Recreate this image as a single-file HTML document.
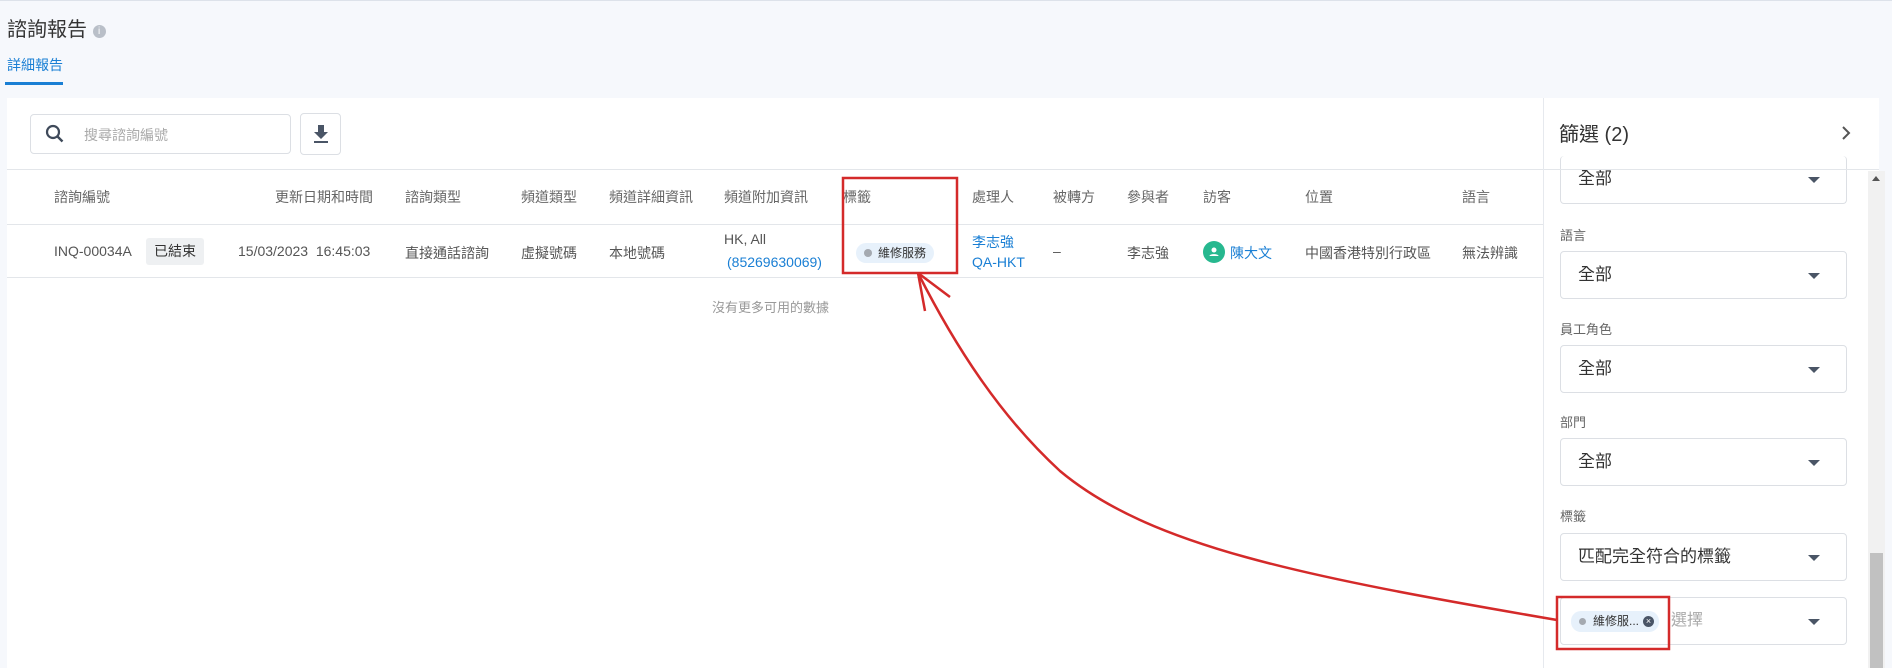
<!DOCTYPE html>
<html><head><meta charset="utf-8"><style>
*{box-sizing:border-box;margin:0;padding:0}
body{width:1892px;height:662px;overflow:hidden;background:#f6f8fc;font-family:"Liberation Sans","Noto Sans CJK TC",sans-serif;color:#555;position:relative;border-top:1px solid #dde2ea}
.a{position:absolute;white-space:nowrap}
.h{font-size:14px;color:#666;top:186px}
.d{font-size:14px;color:#555;top:242px}
.lk{color:#1a7fd4}
.card{position:absolute;left:7px;top:97px;width:1536px;height:570px;background:#fff}
.panel{position:absolute;left:1543px;top:97px;width:336px;height:570px;background:#fff;border-left:1px solid #e6e9ee}
.sel{position:absolute;left:1560px;width:287px;height:48px;border:1px solid #dcdfe4;border-radius:4px;background:#fff;font-size:17px;color:#333;padding:0 0 0 17px;line-height:46px}
.sel:after{content:"";position:absolute;right:26px;top:21px;border-left:6px solid transparent;border-right:6px solid transparent;border-top:6px solid #4a5566}
.lb{position:absolute;left:1560px;font-size:13px;color:#666}
.line{position:absolute;height:1px;background:#e3e6ea}
</style></head><body>
<div class="a" style="left:7px;top:12px;font-size:20px;color:#333">諮詢報告 <span style="display:inline-block;width:13px;height:13px;border-radius:50%;background:#b9bfc8;color:#fff;font-size:10px;text-align:center;line-height:13px;vertical-align:2px">i</span></div>
<div class="a" style="left:7px;top:54px;font-size:14px;color:#1a7fd4">詳細報告</div>
<div class="a" style="left:5px;top:81px;width:58px;height:3px;background:#1a7fd4"></div>

<div class="card"></div>
<div class="a" style="left:30px;top:113px;width:261px;height:40px;border:1px solid #dcdfe4;border-radius:4px"></div>
<svg class="a" style="left:44px;top:122px" width="22" height="22" viewBox="0 0 22 22"><circle cx="9" cy="9" r="6" fill="none" stroke="#3f4a5a" stroke-width="2.2"/><path d="M13.5 13.5l5 5" stroke="#3f4a5a" stroke-width="2.4"/></svg>
<div class="a" style="left:84px;top:124px;font-size:14px;color:#aaa">搜尋諮詢編號</div>
<div class="a" style="left:300px;top:112px;width:41px;height:42px;border:1px solid #dcdfe4;border-radius:4px"></div>
<svg class="a" style="left:311px;top:122px" width="20" height="22" viewBox="0 0 20 22"><path d="M7 2h6v7h4l-7 7-7-7h4z" fill="#4a5566"/><rect x="3" y="18" width="14" height="2" fill="#4a5566"/></svg>
<div class="line" style="left:7px;top:168px;width:1536px"></div>
<div class="line" style="left:7px;top:223px;width:1536px"></div>
<div class="line" style="left:7px;top:276px;width:1536px"></div>

<div class="a h" style="left:54px">諮詢編號</div>
<div class="a h" style="left:275px">更新日期和時間</div>
<div class="a h" style="left:405px">諮詢類型</div>
<div class="a h" style="left:521px">頻道類型</div>
<div class="a h" style="left:609px">頻道詳細資訊</div>
<div class="a h" style="left:724px">頻道附加資訊</div>
<div class="a h" style="left:843px">標籤</div>
<div class="a h" style="left:972px">處理人</div>
<div class="a h" style="left:1053px">被轉方</div>
<div class="a h" style="left:1127px">參與者</div>
<div class="a h" style="left:1203px">訪客</div>
<div class="a h" style="left:1305px">位置</div>
<div class="a h" style="left:1462px">語言</div>

<div class="a d" style="left:54px">INQ-00034A</div>
<div class="a" style="left:146px;top:237px;width:58px;height:27px;background:#eef0f2;border-radius:3px;font-size:14px;color:#333;text-align:center;line-height:27px">已結束</div>
<div class="a d" style="left:238px">15/03/2023&nbsp; 16:45:03</div>
<div class="a d" style="left:405px">直接通話諮詢</div>
<div class="a d" style="left:521px">虛擬號碼</div>
<div class="a d" style="left:609px">本地號碼</div>
<div class="a d" style="left:724px;top:230px">HK, All</div>
<div class="a d lk" style="left:727px;top:253px">(85269630069)</div>
<div class="a" style="left:856px;top:242px;height:20px;padding:0 8px 0 22px;border-radius:10px;background:#e7f1fb;font-size:12px;color:#333;line-height:20px">維修服務<span style="position:absolute;left:8px;top:6px;width:8px;height:8px;border-radius:50%;background:#a4a9b0"></span></div>
<div class="a d lk" style="left:972px;top:231px">李志強</div>
<div class="a d lk" style="left:972px;top:253px">QA-HKT</div>
<div class="a d" style="left:1053px">–</div>
<div class="a d" style="left:1127px">李志強</div>
<div class="a" style="left:1203px;top:240px;width:22px;height:22px;border-radius:50%;background:#27b88f"><svg width="22" height="22" viewBox="0 0 22 22"><circle cx="11" cy="9" r="2.5" fill="#fff"/><path d="M6.5 15c0-2.5 9-2.5 9 0z" fill="#fff"/></svg></div>
<div class="a d lk" style="left:1230px">陳大文</div>
<div class="a d" style="left:1305px">中國香港特別行政區</div>
<div class="a d" style="left:1462px">無法辨識</div>
<div class="a" style="left:712px;top:296px;font-size:13px;color:#999">沒有更多可用的數據</div>

<div class="panel"></div>
<div class="a" style="left:1559px;top:117px;font-size:20px;color:#333">篩選 (2)</div>
<svg class="a" style="left:1839px;top:124px" width="14" height="16" viewBox="0 0 14 16"><path d="M4 2l6 6-6 6" fill="none" stroke="#555" stroke-width="2"/></svg>
<div class="sel" style="top:155px;height:48px;border-top:none">全部</div>
<div class="line" style="left:1544px;top:168px;width:335px"></div>
<div class="lb" style="top:224px">語言</div>
<div class="sel" style="top:250px">全部</div>
<div class="lb" style="top:318px">員工角色</div>
<div class="sel" style="top:344px">全部</div>
<div class="lb" style="top:411px">部門</div>
<div class="sel" style="top:437px">全部</div>
<div class="lb" style="top:505px">標籤</div>
<div class="sel" style="top:532px">匹配完全符合的標籤</div>
<div class="sel" style="top:596px"><span style="position:absolute;left:10px;top:13px;height:21px;width:88px;border-radius:10px;background:#e7f1fb;font-size:12px;color:#333;line-height:21px;padding-left:22px">維修服...<span style="position:absolute;left:8px;top:7px;width:7px;height:7px;border-radius:50%;background:#a4a9b0"></span><span style="position:absolute;right:5px;top:5px;width:11px;height:11px;border-radius:50%;background:#4a5566;color:#fff;font-size:9px;line-height:11px;text-align:center">×</span></span><span style="position:absolute;left:110px;top:0;font-size:16px;color:#aaa">選擇</span></div>
<div class="a" style="left:1868px;top:170px;width:17px;height:497px;background:#f1f1f1"></div>
<div class="a" style="left:1872px;top:175px;border-left:4px solid transparent;border-right:4px solid transparent;border-bottom:5px solid #555"></div>
<div class="a" style="left:1870px;top:552px;width:13px;height:115px;background:#c1c1c1"></div>

<svg class="a" style="left:0;top:0" width="1892" height="662">
<g fill="none" stroke="#d42a2a" stroke-width="2.5">
<rect x="843" y="177" width="114" height="95"/>
<rect x="1557" y="596" width="112" height="52"/>
<path d="M1557 619 C1300 575 1150 545 1060 470 C1000 415 955 345 918 272"/>
<path d="M918 272 L950 296 M918 272 L925 310"/>
</g></svg>
</body></html>
